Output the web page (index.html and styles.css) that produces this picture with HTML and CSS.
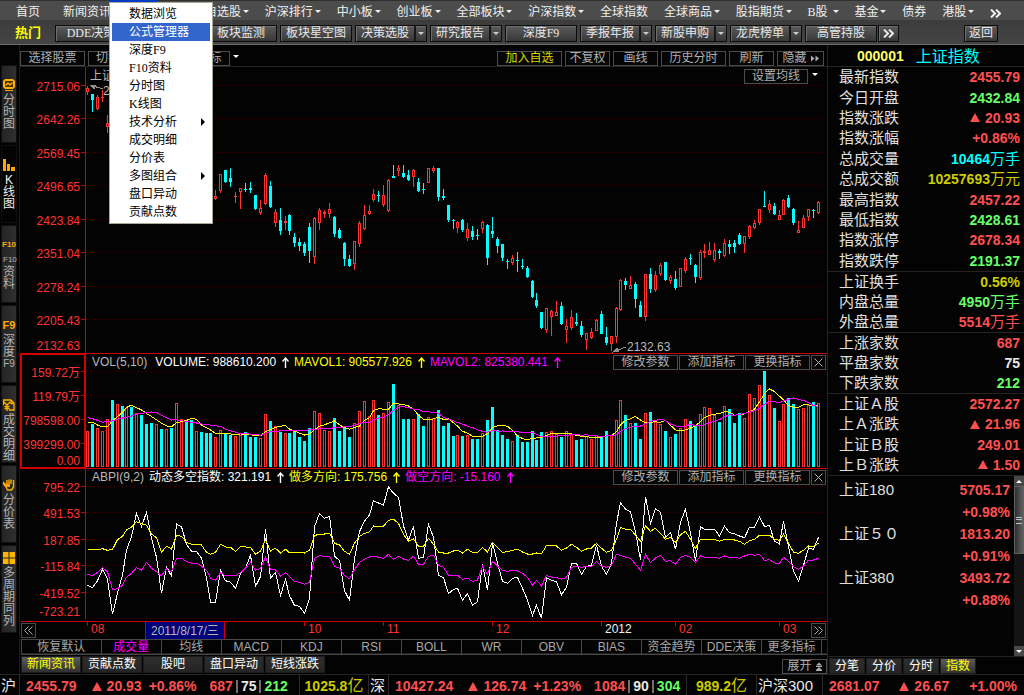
FILE: index.html
```html
<!DOCTYPE html>
<html lang="zh-CN">
<head>
<meta charset="utf-8">
<title>上证指数 000001</title>
<link rel="stylesheet" href="styles.css">
</head>
<body>
<svg class="defs" aria-hidden="true">
  <symbol id="rise" viewBox="0 0 7 11"><path d="M3.5 0.5V11M0.5 4.5L3.5 1L6.5 4.5" fill="none" stroke="currentColor" stroke-width="1.4"/></symbol>
  <symbol id="chevrons" viewBox="0 0 11 9"><path d="M1 0.5L5 4.5L1 8.5M6 0.5L10 4.5L6 8.5" fill="none" stroke="currentColor" stroke-width="2"/></symbol>
  <symbol id="thin-right" viewBox="0 0 9 9"><path d="M0.5 0.5L4.5 4.5L0.5 8.5M4.5 0.5L8.5 4.5L4.5 8.5" fill="none" stroke="currentColor"/></symbol>
  <symbol id="thin-left" viewBox="0 0 9 9"><path d="M4.5 0.5L0.5 4.5L4.5 8.5M8.5 0.5L4.5 4.5L8.5 8.5" fill="none" stroke="currentColor"/></symbol>
  <symbol id="cross" viewBox="0 0 9 9"><path d="M0.5 0.5L8.5 8.5M8.5 0.5L0.5 8.5" fill="none" stroke="currentColor"/></symbol>
</svg>

<header>
  <nav class="nav">
    <div class="nav-start">
      <a href="#">首页</a>
      <a href="#">新闻资讯</a>
      <div class="menu-anchor">
        <button class="menu-trigger" aria-label="菜单" aria-expanded="true"></button>
        <ul class="menu">
          <li><a href="#">数据浏览</a></li>
          <li><a href="#" class="current">公式管理器</a></li>
          <li><a href="#">深度F9</a></li>
          <li><a href="#">F10资料</a></li>
          <li><a href="#">分时图</a></li>
          <li><a href="#">K线图</a></li>
          <li><a href="#" class="parent">技术分析</a></li>
          <li><a href="#">成交明细</a></li>
          <li><a href="#">分价表</a></li>
          <li><a href="#" class="parent">多图组合</a></li>
          <li><a href="#">盘口异动</a></li>
          <li><a href="#">贡献点数</a></li>
        </ul>
      </div>
    </div>
    <div class="nav-rest">
      <a href="#" class="drop">自选股</a>
      <a href="#" class="drop">沪深排行</a>
      <a href="#" class="drop">中小板</a>
      <a href="#" class="drop">创业板</a>
      <a href="#" class="drop">全部板块</a>
      <a href="#" class="drop">沪深指数</a>
      <a href="#">全球指数</a>
      <a href="#" class="drop">全球商品</a>
      <a href="#" class="drop">股指期货</a>
      <a href="#" class="drop">B股&nbsp;</a>
      <a href="#" class="drop">基金</a>
      <a href="#">债券</a>
      <a href="#" class="drop">港股</a>
      <a href="#" aria-label="更多"><svg class="more"><use href="#chevrons"/></svg></a>
    </div>
  </nav>
  <div class="tools">
    <strong>热门</strong>
    <div class="tool-list">
      <button class="tool">DDE决策</button>
      <button class="tool" aria-label="工具"></button>
      <button class="tool">板块监测</button>
      <button class="tool">板块星空图</button>
      <button class="tool split"><span>决策选股</span><i></i></button>
      <button class="tool split"><span>研究报告</span><i></i></button>
      <button class="tool">深度F9</button>
      <button class="tool split"><span>季报年报</span><i></i></button>
      <button class="tool split"><span>新股申购</span><i></i></button>
      <button class="tool split"><span>龙虎榜单</span><i></i></button>
      <button class="tool">高管持股</button>
    </div>
    <button class="tool small" aria-label="更多工具"><svg class="more"><use href="#chevrons"/></svg></button>
    <button class="tool back">返回</button>
  </div>
</header>

<main>
  <nav class="side">
    <a href="#"><svg viewBox="0 0 12 12"><path d="M2 0H10L12 2V8L10 10H2L0 8V2Z" fill="#ffb000"/><path d="M2 2H10V8H2Z" fill="#402800"/><path d="M2.500 6.500L5 4L7 6L9.500 3.500" stroke="#ffb000" stroke-width="1.500" fill="none"/><path d="M2 11.500H10" stroke="#ffa000"/></svg><span>分时图</span></a>
    <a href="#" class="active"><svg viewBox="0 0 12 12"><path d="M0 0H3V12H0ZM4 5H7V12H4ZM8 8H12V12H8Z" fill="#ffa800"/></svg><span>K线图</span></a>
    <a href="#"><b>F10</b><span><small>F10</small>资料</span></a>
    <a href="#"><b class="wide">F9</b><span>深度<em>F9</em></span></a>
    <a href="#"><svg viewBox="0 0 12 12"><path d="M0.500 6V1H8M8 1L11 4V11H6M8 1V4.500H11M1 3L4 6L7 3M4 6V12M1.500 7.500H6.500M1.500 9.500H6.500" stroke="#ffb000" stroke-width="1.300" fill="none"/></svg><span>成交明细</span></a>
    <a href="#"><svg viewBox="0 0 12 12"><path d="M0 3L3 6M4 6V1M6 5V0.500M8 5V0.500M10.500 1V8L8.500 11H4.500L3 8L0 4" stroke="#ffb000" stroke-width="1.400" fill="none"/><path d="M3 5H7V8H3Z" fill="#ffa000"/></svg><span>分价表</span></a>
    <a href="#" class="last"><svg viewBox="0 0 12 12"><path d="M0 0H5.500V5.500H0ZM6.500 0H12V5.500H6.500ZM0 6.500H5.500V12H0ZM6.500 6.500H12V12H6.500Z" fill="#ffb400"/></svg><span>多周期同列</span></a>
  </nav>

  <section class="charts">
    <div class="chart-tools">
      <button class="box">选择股票</button>
      <button class="box period">切换</button>
      <button class="box">选择指标</button>
      <i class="caret"></i>
      <span class="spacer"></span>
      <button class="box join">加入自选</button>
      <button class="box short">不复权</button>
      <button class="box short">画线</button>
      <button class="box">历史分时</button>
      <button class="box short">刷新</button>
      <button class="box short hide">隐藏<svg viewBox="0 0 8 7"><path d="M0 0.500L3.500 3.500L0 6.500ZM4.500 0.500L8 3.500L4.500 6.500Z" fill="currentColor"/></svg></button>
    </div>
    <div class="pane">
      <svg id="price" class="plot" viewBox="20 67 807 286" role="img" aria-label="K线图"></svg>
      <div class="pane-head average">
        <span class="name">上证</span>
        <span class="spacer"></span>
        <button class="box">设置均线</button>
        <i class="caret"></i>
      </div>
    </div>
    <div class="pane">
      <svg id="volume" class="plot" viewBox="20 353 807 116" role="img" aria-label="成交量"></svg>
      <div class="pane-head">
        <span class="name">VOL(5,10)</span>
        <span class="white">VOLUME: 988610.200<svg><use href="#rise"/></svg></span>
        <span class="yellow">MAVOL1: 905577.926<svg><use href="#rise"/></svg></span>
        <span class="magenta">MAVOL2: 825380.441<svg><use href="#rise"/></svg></span>
        <span class="spacer"></span>
        <div class="pane-buttons"><button class="box">修改参数</button><button class="box">添加指标</button><button class="box">更换指标</button><button class="box close" aria-label="关闭"><svg><use href="#cross"/></svg></button></div>
      </div>
    </div>
    <div class="pane">
      <svg id="abpi" class="plot" viewBox="20 469 807 153" role="img" aria-label="ABPI"></svg>
      <div class="pane-head low">
        <span class="name">ABPI(9,2)</span>
        <span class="white">动态多空指数: 321.191<svg><use href="#rise"/></svg></span>
        <span class="yellow">做多方向: 175.756<svg><use href="#rise"/></svg></span>
        <span class="magenta">做空方向: -15.160<svg><use href="#rise"/></svg></span>
        <span class="spacer"></span>
        <div class="pane-buttons"><button class="box">修改参数</button><button class="box">添加指标</button><button class="box">更换指标</button><button class="box close" aria-label="关闭"><svg><use href="#cross"/></svg></button></div>
      </div>
    </div>
    <div class="pane">
      <svg id="dates" class="plot" viewBox="20 622 807 17" role="img" aria-label="日期"></svg>
      <div class="pane-head dates-head">
        <button class="box close" aria-label="向前"><svg><use href="#thin-left"/></svg></button>
        <span class="spacer"></span>
        <button class="box close" aria-label="向后"><svg><use href="#thin-right"/></svg></button>
      </div>
    </div>
    <div class="indicators">
      <button>恢复默认</button>
      <button class="magenta">成交量</button>
      <button>均线</button>
      <button>MACD</button>
      <button>KDJ</button>
      <button>RSI</button>
      <button>BOLL</button>
      <button>WR</button>
      <button>OBV</button>
      <button>BIAS</button>
      <button>资金趋势</button>
      <button>DDE决策</button>
      <button>更多指标</button>
    </div>
    <div class="info-tabs">
      <button class="tab active">新闻资讯</button>
      <button class="tab">贡献点数</button>
      <button class="tab">股吧</button>
      <button class="tab">盘口异动</button>
      <button class="tab">短线涨跌</button>
      <span class="spacer"></span>
      <button class="box expand">展开<svg viewBox="0 0 6 9"><path d="M0 3.500L3 0.500L6 3.500ZM0 8L3 5L6 8Z" fill="currentColor"/><path d="M0 4.500H6M0 8.500H6" stroke="currentColor"/></svg></button>
    </div>
  </section>

  <aside class="quote">
    <h1><span>000001</span>上证指数</h1>
    <dl class="ten">
      <div><dt>最新指数</dt><dd class="red">2455.79</dd></div>
      <div><dt>今日开盘</dt><dd class="green">2432.84</dd></div>
      <div><dt>指数涨跌</dt><dd class="red"><i class="up"></i>20.93</dd></div>
      <div><dt>指数涨幅</dt><dd class="red">+0.86%</dd></div>
      <div><dt>总成交量</dt><dd class="cyan">10464<u>万手</u></dd></div>
      <div><dt>总成交额</dt><dd class="gold">10257693<u>万元</u></dd></div>
      <div><dt>最高指数</dt><dd class="red">2457.22</dd></div>
      <div><dt>最低指数</dt><dd class="green">2428.61</dd></div>
      <div><dt>指数涨停</dt><dd class="red">2678.34</dd></div>
      <div><dt>指数跌停</dt><dd class="green">2191.37</dd></div>
    </dl>
    <dl class="three">
      <div><dt>上证换手</dt><dd class="gold">0.56%</dd></div>
      <div><dt>内盘总量</dt><dd class="green">4950<u>万手</u></dd></div>
      <div><dt>外盘总量</dt><dd class="red">5514<u>万手</u></dd></div>
    </dl>
    <dl class="three">
      <div><dt>上涨家数</dt><dd class="red">687</dd></div>
      <div><dt>平盘家数</dt><dd class="pale">75</dd></div>
      <div><dt>下跌家数</dt><dd class="green">212</dd></div>
    </dl>
    <dl class="four">
      <div><dt>上证Ａ股</dt><dd class="red">2572.27</dd></div>
      <div><dt>上Ａ涨跌</dt><dd class="red"><i class="up"></i>21.96</dd></div>
      <div><dt>上证Ｂ股</dt><dd class="red">249.01</dd></div>
      <div><dt>上Ｂ涨跌</dt><dd class="red"><i class="up"></i>1.50</dd></div>
    </dl>
    <div class="others">
      <dl>
        <div><dt>上证180</dt><dd class="red">5705.17</dd></div>
        <div><dt></dt><dd class="red">+0.98%</dd></div>
        <div><dt>上证５０</dt><dd class="red">1813.20</dd></div>
        <div><dt></dt><dd class="red">+0.91%</dd></div>
        <div><dt>上证380</dt><dd class="red">3493.72</dd></div>
        <div><dt></dt><dd class="red">+0.88%</dd></div>
      </dl>
      <div class="scroll">
        <button aria-label="向上滚动"><i class="tri-up"></i></button>
        <div class="thumb"></div>
        <button class="down" aria-label="向下滚动"><i class="caret"></i></button>
      </div>
    </div>
    <div class="quote-tabs">
      <button class="tab">分笔</button>
      <button class="tab">分价</button>
      <button class="tab">分时</button>
      <button class="tab active">指数</button>
    </div>
  </aside>
</main>

<footer>
  <div class="market">沪</div>
  <div class="figures red"><span class="price">2455.79</span><span><i class="up"></i>20.93</span><span>+0.86%</span><span class="counts">687<i class="bar"></i><span class="pale">75</span><i class="bar"></i><span class="green">212</span></span></div>
  <div class="turnover gold">1025.8<u>亿</u></div>
  <div class="market">深</div>
  <div class="figures red"><span class="price">10427.24</span><span><i class="up"></i>126.74</span><span>+1.23%</span><span class="counts">1084<i class="bar"></i><span class="pale">90</span><i class="bar"></i><span class="green">304</span></span></div>
  <div class="turnover gold">989.2<u>亿</u></div>
  <div class="market">沪深300</div>
  <div class="figures spread red"><span>2681.07</span><span><i class="up"></i>26.67</span><span>+1.00%</span></div>
</footer>
<script src="chart.js"></script>
</body>
</html>
```

FILE: styles.css
```css
* { box-sizing: border-box; }
body {
  margin: 0;
  min-height: 100vh;
  display: flex;
  flex-direction: column;
  background: #030303;
  color: #e0e0e0;
  font: 12px/16px "Liberation Sans", "Noto Sans CJK SC", sans-serif;
  white-space: nowrap;
}
a { color: inherit; text-decoration: none; }
button { font: inherit; color: inherit; padding: 0; margin: 0; border: 0; background: none; }
ul, dl, dd, h1 { margin: 0; padding: 0; }
ul { list-style: none; }
i, em { font-style: normal; }
u { text-decoration: none; font-weight: 400; font-size: 16px; }
.defs { display: none; }
.spacer { flex: 1; }
.white { color: #fff; }
.yellow { color: #ff0; }
.magenta { color: #f0f; }
.red { color: #ff5050; }
.green { color: #6f6; }
.cyan { color: #0ff; }
.gold { color: #cc0; }
.pale { color: #e8e8e8; }

/* top navigation */
.nav {
  display: flex;
  height: 20px;
  padding: 3px 23px 0 16px;
  border-top: 1px solid #303030;
  background: #4c4c4c;
  color: #f0f0f0;
  font-family: "Liberation Serif", "Noto Sans CJK SC", serif;
}
.nav-start { display: flex; flex: 0 0 189px; gap: 23px; }
.nav-rest { display: flex; flex: 1; justify-content: space-between; }
.drop::after, .caret {
  content: "";
  display: inline-block;
  border: 3px solid transparent;
  border-top-color: currentColor;
  border-bottom: 0;
}
.drop::after { margin-left: 2px; vertical-align: 3px; }
.more { width: 11px; height: 9px; vertical-align: middle; }
.menu-anchor { position: relative; margin: -4px 0 0 -25px; }
.menu-trigger { display: block; width: 48px; height: 20px; background: #003cc8; }
.menu {
  position: absolute;
  z-index: 2;
  top: 2px;
  left: 0;
  width: 104px;
  padding: 2px;
  border: 1px solid #aca899;
  background: #fff;
  color: #000;
}
.menu a { display: flex; align-items: center; height: 18px; padding: 0 5px 0 17px; }
.menu .current { background: #36c; color: #fff; }
.menu .parent::after {
  content: "";
  margin-left: auto;
  border: 4px solid transparent;
  border-left-color: #000;
  border-right: 0;
}

/* hot tools */
.tools {
  display: flex;
  align-items: center;
  gap: 1px;
  height: 25px;
  padding: 2px 26px 0 15px;
  border-bottom: 1px solid #6a6a6a;
  background: linear-gradient(#3c3c3c, #444);
  font-family: "Liberation Serif", "Noto Sans CJK SC", serif;
}
.tools strong { flex: 0 0 39px; color: #ff0; font-size: 13px; }
.tool-list { display: flex; gap: 3px; flex: 0 0 822px; }
.tool {
  display: flex;
  align-items: center;
  justify-content: center;
  width: 72px;
  height: 17px;
  border: 1px solid #0c0c0c;
  background: linear-gradient(#5a5a5a, #383838);
  box-shadow: inset 1px 1px #6e6e6e;
  color: #e8e8e8;
}
.split span { flex: 1; }
.split i {
  display: grid;
  place-items: center;
  width: 12px;
  height: 15px;
  border-left: 2px solid #181818;
}
.split i::after { content: ""; border: 3px solid transparent; border-top-color: #ccc; border-bottom: 0; }
.small { width: 21px; }
.back { width: 34px; margin-left: auto; }

main { display: grid; grid-template-columns: 20px minmax(0, 1fr) 197px; flex: 1; }

/* left strip */
.side { padding: 20px 2px 0 1px; border-right: 1px solid #1c1c1c; }
.side a {
  display: flex;
  flex-direction: column;
  align-items: center;
  gap: 3px;
  height: 78px;
  margin-bottom: 2px;
  padding-top: 13px;
  border: 1px solid #101010;
  background: linear-gradient(90deg, #242424, #303030);
  color: #b4b4b4;
}
.side a.active { background: #030303; color: #f0f0f0; }
.side a.last { height: 88px; padding-top: 6px; }
.side svg { width: 12px; height: 12px; flex: none; }
.side span { width: 12px; line-height: 12px; white-space: normal; word-break: break-all; text-align: center; }
.side b { height: 12px; font-size: 8px; line-height: 12px; color: #ffa800; }
.side b.wide { font-size: 11px; }
.side small { display: block; font-size: 8px; line-height: 12px; word-break: normal; }
.side em { display: block; font-size: 10px; word-break: normal; }

/* framed buttons */
.box {
  display: flex;
  align-items: center;
  justify-content: center;
  width: 65px;
  height: 15px;
  border: 1px solid #4c4c4c;
  background: #050505;
  color: #b0b0b0;
  line-height: 13px;
}
.short { width: 45px; }
.period { width: 74px; justify-content: flex-start; padding-left: 7px; }
.close { width: 15px; }
.close svg { width: 9px; height: 9px; }
.chart-tools {
  display: flex;
  align-items: flex-end;
  gap: 3px;
  height: 22px;
  padding-right: 3px;
  border-bottom: 1px solid #242424;
}
.chart-tools .caret { margin-bottom: 8px; }
.chart-tools .join { color: #d8d800; }
.chart-tools .hide { width: 47px; }
.hide svg { width: 8px; height: 7px; margin-left: 4px; }
.caret { color: #fff; }

/* chart panes */
.pane { display: grid; }
.pane > * { grid-area: 1 / 1; }
.plot { display: block; width: 100%; height: auto; shape-rendering: crispEdges; }
.plot text { font-size: 12px; fill: #f33; }
.plot .axis { text-anchor: end; }
.plot .grey { fill: #b8b8b8; }
.plot .plain { fill: #f0f0f0; }
.pane-head {
  display: flex;
  gap: 5px;
  align-self: start;
  margin: 2px 1px 0 72px;
  line-height: 15px;
}
.pane-head .name { margin-right: 3px; color: #b8b8b8; }
.pane-head > span > svg { width: 7px; height: 11px; margin-left: 6px; vertical-align: -2px; }
.low { margin-top: 1px; }
.low .name { margin-right: 0; }
.average { margin: 2px 9px 0 70px; gap: 4px; }
.average .box { width: 64px; }
.average .caret { margin-top: 4px; align-self: flex-start; }
.pane-buttons { display: flex; gap: 1px; }
.dates-head { margin: 1px 1px 0 1px; }

.indicators {
  display: flex;
  height: 16px;
  margin-left: 1px;
  border: 1px solid #484848;
  border-right: 0;
  box-shadow: inset 0 -1px #202020;
  padding-right: 5px;
  color: #a8a8a8;
}
.indicators button { flex: 60 1 0; min-width: 0; border-right: 1px solid #484848; line-height: 14px; }
.indicators button:first-child { flex-grow: 80; }
.indicators .magenta { color: #f0f; }
.tab {
  width: 60px;
  height: 17px;
  border: 1px solid #1c1c1c;
  background: linear-gradient(#2e2e2e, #242424);
  color: #fff;
  line-height: 15px;
}
.tab.active { background: linear-gradient(#5c5c5c, #303030); color: #ff0; }
.info-tabs { display: flex; align-items: center; gap: 1px; height: 19px; padding-left: 1px; }
.info-tabs .expand { width: 45px; align-self: flex-end; }
.expand svg { width: 6px; height: 9px; margin-left: 4px; }

/* quote panel */
.quote { display: flex; flex-direction: column; border-left: 1px solid #242424; font-size: 15px; line-height: 20px; }
.quote h1 {
  display: flex;
  gap: 12px;
  height: 22px;
  padding-left: 29px;
  border-bottom: 1px solid #242424;
  color: #0ff;
  font-size: 16px;
  font-weight: 400;
  line-height: 23px;
}
.quote h1 span { color: #ff6; font-size: 14px; font-weight: 700; }
.quote dl { display: grid; grid-auto-rows: 1fr; padding: 0 4px 0 11px; }
.quote dl > div { display: flex; justify-content: space-between; align-items: center; }
.quote > dl { border-bottom: 1px solid #242424; }
.quote dd { display: flex; align-items: center; font-size: 14px; font-weight: 700; }
.quote dd u { font-size: 15px; }
.ten { min-height: 205px; }
.three { min-height: 61px; }
.four { min-height: 82px; }
.up {
  display: inline-block;
  margin-right: 5px;
  border: 5px solid transparent;
  border-bottom: 9px solid currentColor;
  border-top: 0;
}
.others { display: flex; flex: 1; }
.others dl { flex: 1; grid-auto-rows: 22px; align-content: start; padding: 3px 4px 0 11px; }
.scroll { display: flex; flex-direction: column; width: 10px; background: #141414; }
.scroll button { display: grid; place-items: center; height: 10px; background: #484848; }
.thumb { height: 68px; border: 1px solid #606060; background: linear-gradient(90deg, #303030, #606060); }
.thumb::after { content: ""; display: block; height: 5px; margin: 30px 1px 0; border: 1px solid #c0c0c0; border-width: 1px 0; background: linear-gradient(transparent 1px, #c0c0c0 1px, #c0c0c0 2px, transparent 2px); }
.scroll .down { margin-top: auto; }
.tri-up { border: 3px solid transparent; border-top: 0; border-bottom-color: #fff; }
.quote-tabs { display: flex; gap: 1px; height: 18px; padding: 1px 0 0 1px; font-size: 12px; border-top: 1px solid #242424; }
.quote-tabs .tab { width: 36px; height: 16px; line-height: 14px; }

/* status line */
footer {
  display: grid;
  grid-template-columns: 20fr 280fr 69fr 20fr 298fr 70fr 66fr 201fr;
  height: 21px;
  border-top: 1px solid #242424;
  font-size: 14px;
  font-weight: 700;
  line-height: 22px;
}
footer > div { min-width: 0; border-right: 1px solid #2a2a2a; }
footer > div:last-child { border-right: 0; }
.market { padding-left: 1px; color: #e8e8e8; font-size: 15px; font-weight: 400; }
.figures { display: flex; gap: 7px; padding-left: 6px; }
.figures .price { margin-right: 8px; }
.figures .counts { display: flex; align-items: center; margin-left: 6px; }
.figures .up { margin-right: 5px; }
.spread { justify-content: space-between; padding-right: 7px; }
.bar { width: 2px; height: 13px; margin: 0 3px; background: #707070; }
.turnover { display: flex; justify-content: center; }
```

FILE: chart.js
```js
// One plot unit in the data strings is a third of a grid pixel.
const UNIT = 3;
const slot = i => Math.floor(87.45 + 4.94 * i);
const px = v => Math.round(v / UNIT);
const nums = s => s.trim().split(/\s+/).map(Number);
const rect = (x, y, w, h, fill) => `<rect x="${x}" y="${y}" width="${w}" height="${h}" fill="${fill}"/>`;

const RED = '#ff3232', CYAN = '#00ffff', FRAME = '#d00000';

function body(x, top, bottom, kind) {
  const h = Math.max(1, bottom - top);
  let out = rect(x - 1, top, 3, h, kind === 'r' ? RED : CYAN);
  if (kind === 'r' && h > 2) out += rect(x, top + 1, 1, h - 2, '#030303');
  return out;
}

function grid(rows) {
  return rows.map(y =>
    `<line x1="90" x2="824" y1="${y + 0.5}" y2="${y + 0.5}" stroke="#4a0000" stroke-dasharray="1 3"/>` +
    rect(81, y, 4, 1, FRAME)).join('');
}

function labels(list) {
  return list.map(([t, y]) => `<text class="axis" x="80" y="${y}">${t}</text>`).join('');
}

function line(values, color) {
  const pts = values.map((v, i) => `${slot(i) + 0.5},${v.toFixed(1)}`).join(' ');
  return `<polyline points="${pts}" fill="none" stroke="${color}"/>`;
}

// Candles: kind, body top, body bottom, high, low.
const runs = [
  { start: 0, base: 0, data: 'r 263 275 257 284,c 282 300 282 335,r 290 328 285 330,r 290 293 270 305,r 368 382 345 400' },
  { start: 26, base: 0, data: 'r 587 597 570 600,r 522 572 522 578,c 510 545 510 548,c 533 547 504 560,r 587 590 575 608,r 565 575 563 627,c 567 570 548 575,c 563 569 547 578,c 585 628 585 630,r 624 640 600 645,r 524 612 518 615,c 558 622 543 624,r 636 668 627 680,c 660 692 624 705,r 662 668 648 690,c 645 693 642 704,c 712 729 698 740,c 725 738 714 752,c 732 758 727 768,c 682 753 668 788,r 653 772 650 793,r 630 668 625 690,r 637 642 630 655,r 626 643 608 655,c 650 703 648 711,c 690 713 684 718' },
  { start: 52, base: 480, data: 'c 250 297 246 318,c 297 318 285 321,r 244 311 243 330,r 189 251 183 261,r 166 206 135 210,r 154 161 135 165,r 102 119 87 126,c 105 108 93 126,r 106 134 75 141,r 60 152 57 156,c 48 54 15 54,r 25 32 15 48,c 39 51 15 54,c 45 60 30 63,r 31 50 27 81,c 66 93 54 96,c 87 90 69 102,r 25 68 24 69,r 25 32 18 39,c 24 110 24 123,c 108 114 87 120,c 135 180 135 186,c 180 183 177 207,r 187 203 183 219,c 180 210 177 216,r 208 233 189 243,c 213 231 198 240,c 225 228 207 240,r 187 206 183 219,c 195 294 192 315,c 213 221 171 234,c 237 258 231 279,c 252 294 252 303,c 303 306 297 327,r 295 308 285 315,c 300 303 276 336,c 318 321 297 327,c 324 351 318 354,c 363 411 360 414,c 420 438 399 444,c 456 504 456 507,r 445 509 444 519,r 454 470 450 528,r 457 467 423 468,c 438 492 426 495,r 499 509 477 549,r 472 503 450 510,c 486 492 459 498,c 498 525 483 531,r 520 539 519 570,r 517 533 504 537,r 481 512 477 513,c 462 522 453 522,c 531 549 501 555,r 529 551 528 573,r 445 530 441 549,r 361 449 357 453,c 363 375 354 390,r 376 386 348 387,c 372 417 366 444,c 435 471 423 471,r 343 470 342 483,c 342 387 324 399,r 346 389 333 396,r 316 341 309 348,c 306 360 306 363,r 352 362 345 372,c 357 384 333 390,r 325 382 325 382' },
  { start: 121, base: 540, data: 'r 238 272 231 279,c 234 237 222 255,c 255 291 252 309,r 217 293 210 300,r 214 220 192 234,r 211 224 186 225,r 211 239 189 246,c 213 219 207 237,r 190 227 177 231,c 192 201 180 222,c 189 201 180 219,c 165 192 159 195,r 169 191 168 219,r 139 170 135 177,r 130 143 120 147,r 88 128 87 135,c 78 81 33 81,r 73 89 60 99,c 78 102 69 105,r 106 119 90 120,r 61 104 57 105,c 54 81 45 84,c 87 129 84 135,r 151 158 123 159,r 115 143 105 144,r 88 110 87 123,c 90 93 87 114,r 67 99 63 102' }
];

let candles = '';
for (const run of runs) {
  run.data.split(',').forEach((entry, k) => {
    const [kind, ...v] = entry.split(' ');
    const [top, bottom, high, low] = v.map(n => px(Number(n) + run.base));
    const x = slot(run.start + k);
    candles += rect(x, high, 1, low - high, kind === 'r' ? RED : CYAN) + body(x, top, bottom, kind);
  });
}

document.getElementById('price').innerHTML =
  grid([85, 118, 152, 185, 219, 252, 286, 319]) + rect(85, 67, 1, 286, FRAME) + candles +
  labels([['2715.06', 91], ['2642.26', 124], ['2569.45', 158], ['2496.65', 191], ['2423.84', 225],
    ['2351.04', 258], ['2278.24', 292], ['2205.43', 325], ['2132.63', 350]]) +
  '<path d="M90 85L103 89M90 85L96 85L94 89Z" stroke="#909090" fill="#909090"/>' +
  '<text class="grey" x="103" y="95">27</text>' +
  '<path d="M613 352L626 347M613 352L617 348L619 351Z" stroke="#909090" fill="#909090"/>' +
  '<text class="grey" x="627" y="351">2132.63</text>';

// Volume bars: kind and top of each.
const bars = `r244 c222 r235 r244 r208 c150 r163 c168 r174 c171 r190 c195 c222 c219 r223 c237 r238 c233 r160 r208
 c217 c210 r244 c246 c249 c249 r262 r241 c252 c254 r259 r254 c246 c261 c261 r265 r193 c213 r229 c246
 r250 c249 c242 c261 c273 c234 r184 r190 r241 r244 c204 c243 c234 c261 r220 r184 r154 r198 r151 c195
 r189 r157 c102 r165 c207 c207 r208 c192 c228 r202 r205 c180 c228 c219 c258 r256 c258 r256 c267 c267
 r250 c210 c171 c241 c255 c267 r274 c255 c276 c276 c243 c270 c246 r247 r244 r253 c261 r244 r253 c270
 c267 r259 r267 r256 c261 c243 r256 r211 r151 c195 r220 c219 c267 r190 c186 r217 r223 c243 r262 c252
 r235 r208 c213 c228 r193 r172 r175 r195 c216 r169 c177 c219 c189 r205 r133 r145 r106 c63 r136 c174
 r214 r163 c144 c162 r178 r175 r166 c156 r160`.trim().split(/\s+/)
  .map(s => ({ kind: s[0], top: Number(s.slice(1)) }));

function average(span, lead) {
  return bars.map((_, i) => {
    if (i < lead.length) return 350 + lead[i] / UNIT;
    const part = bars.slice(i - span + 1, i + 1);
    return 350 + part.reduce((sum, b) => sum + b.top, 0) / part.length / UNIT;
  });
}

document.getElementById('volume').innerHTML =
  grid([371, 395, 419, 443]) +
  bars.map((b, i) => body(slot(i), 350 + px(b.top), 467, b.kind)).join('') +
  line(average(5, [217, 217, 225, 231]), '#ffff00') +
  line(average(10, [203, 206, 211, 217, 214, 213, 208, 204, 202]), '#ff00ff') +
  rect(20, 353, 807, 1, FRAME) + rect(20, 468, 807, 1, FRAME) +
  `<rect x="21" y="354" width="64" height="114" fill="none" stroke="${FRAME}" stroke-width="2"/>` +
  labels([['159.72万', 377], ['119.79万', 401], ['798598.00', 425], ['399299.00', 449], ['0.00', 465]]);

// Directional index lines.
const net = nums(`706 713 692 658 688 793 730 675 600 560 490 530 487 565 622 730 650 679 522 530 583 604 604 625 685 757 757 661 692 697 715 671 655 616 709 680 538 685 667 737 688 737 766 769 790 745 530 490 505 499 619 631 722 751 628 545
 513 495 452 459 465 410 430 442 528 570 529 625 622 523 562 676 683 731 718 715 751 731 766 755 643 720 580 640 694 700 685 682 715 750 796 766 805 684 691 696 734 712 640 640 673 649 645 585 649 673 640 520 458 478 485 545 630 440 520 476 487 562 548 598 516
 478 550 632 530 538 538 538 558 529 548 551 558 563 532 532 502 529 527 574 582 513 590 664 694 646 594 598 562`);
const longs = nums(`599 599 599 596 601 598 569 559 540 531 515 521 526 552 563 607 589 597 556 559 577 583 583 585 607 613 607 583 591 592 604 589 591 592 613 604 569 603 595 609 598 608 609 607 609 601 557 552 552 550 580 585 604 613 580 559
 550 546 528 529 529 511 508 520 553 574 567 589 589 565 583 606 609 609 603 601 609 598 607 607 592 606 577 592 607 605 601 598 606 612 612 609 612 586 586 588 601 594 583 592 604 597 594 580 595 607 601 568 532 538 538 556 574 527 544 535 550 568 562 577 554
 544 568 595 568 568 568 568 574 568 569 570 574 583 572 568 556 556 556 568 571 553 580 606 610 601 588 589 580`);
const shorts = nums(`673 677 667 653 665 719 716 706 682 670 653 661 637 655 665 677 657 665 625 625 634 640 640 648 661 685 691 668 677 677 677 668 655 637 661 655 622 658 659 679 668 679 694 697 703 697 625 617 619 619 649 655 677 686 659 637
 628 621 619 622 625 613 628 619 627 631 619 643 643 619 616 646 652 676 676 676 688 685 694 690 649 673 634 648 661 664 661 663 670 682 706 691 708 676 682 682 688 682 652 649 652 649 649 634 649 652 646 613 616 622 625 643 661 613 638 624 616 634 632 643 622
 616 622 638 617 622 622 622 625 618 622 622 625 618 613 616 613 631 629 639 640 622 634 650 658 648 630 630 625`);
const scaled = list => list.map(v => 350 + v / UNIT);

document.getElementById('abpi').innerHTML =
  grid([486, 512, 539, 565, 592]) +
  '<line x1="90" x2="824" y1="618.5" y2="618.5" stroke="#4a0000" stroke-dasharray="1 3"/>' +
  rect(85, 469, 1, 150, FRAME) + rect(21, 621, 806, 1, FRAME) +
  line(scaled(net), '#ffffff') + line(scaled(longs), '#ffff00') + line(scaled(shorts), '#ff00ff') +
  labels([['795.22', 492], ['491.53', 518], ['187.85', 545], ['-115.84', 571], ['-419.52', 598], ['-723.21', 616]]);

const months = [[87, '08'], [304, '10'], [383, '11'], [492, '12'], [601, '2012'], [675, '02'], [779, '03']];
document.getElementById('dates').innerHTML =
  months.map(([x, t]) => rect(x, 622, 1, 4, FRAME) +
    `<text x="${x + 4}" y="633"${t.length > 2 ? ' class="plain"' : ''}>${t}</text>`).join('') +
  rect(145, 622, 80, 17, FRAME) + rect(146, 622, 78, 17, '#000078') +
  '<text class="grey" x="151" y="635">2011/8/17/三</text>';
```
